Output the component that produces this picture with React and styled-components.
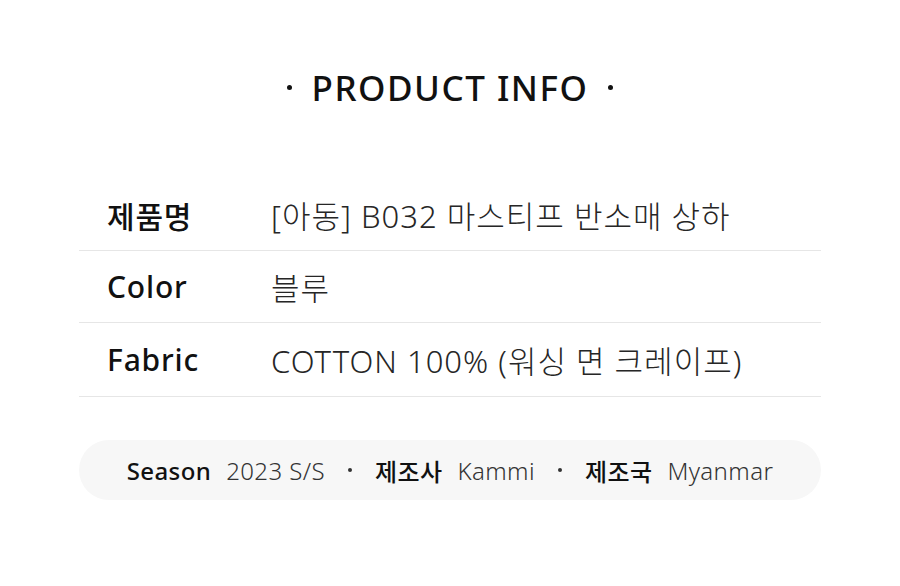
import React from "react";
import styled, { createGlobalStyle } from "styled-components";

const GlobalStyle = createGlobalStyle`
  html, body {
    margin: 0;
    padding: 0;
    background: #fff;
  }
  body {
    font-family: "Noto Sans", "Noto Sans CJK KR", sans-serif;
    color: #111;
  }
`;

const Page = styled.div`
  width: 900px;
  height: 586px;
  padding: 60px 79px 0;
  box-sizing: border-box;
  display: flex;
  flex-direction: column;
`;

const Heading = styled.h2`
  margin: 0;
  height: 54px;
  display: flex;
  align-items: center;
  justify-content: center;
  gap: 20px;
  font-size: 35px;
  font-weight: 500;
  letter-spacing: 1.5px;
  color: #111;
`;

const Dot = styled.span`
  width: 5px;
  height: 5px;
  border-radius: 50%;
  background: #111;
`;

const Table = styled.div`
  margin-top: 65px;
  display: flex;
  flex-direction: column;
`;

const Row = styled.div`
  display: flex;
  align-items: center;
  height: ${({ h }) => h || "72px"};
  border-bottom: 1px solid #e6e6e6;
  box-sizing: border-box;
`;

const Label = styled.div`
  width: 164px;
  padding-left: 28px;
  font-size: 30px;
  font-weight: 500;
  letter-spacing: 0.8px;
  color: #111;
`;

const Value = styled.div`
  font-size: 31px;
  font-weight: 300;
  letter-spacing: 1px;
  color: #262626;
`;

const Pill = styled.div`
  margin-top: 43px;
  height: 60px;
  border-radius: 30px;
  background: #f7f7f7;
  display: flex;
  align-items: center;
  justify-content: center;
  font-size: 24px;
  letter-spacing: 0.4px;
`;

const Key = styled.span`
  font-weight: 500;
  color: #111;
  margin-right: 15px;
`;

const Val = styled.span`
  font-weight: 300;
  color: #333;
`;

const Sep = styled.span`
  width: 4px;
  height: 4px;
  border-radius: 50%;
  background: #333;
  margin: 0 23px;
`;

const rows = [
  { label: "제품명", value: "[아동] B032 마스티프 반소매 상하", h: "72px" },
  { label: "Color", value: "블루", h: "72px" },
  { label: "Fabric", value: "COTTON 100% (워싱 면 크레이프)", h: "74px" },
];

export default function App() {
  return (
    <Page>
      <GlobalStyle />
      <Heading>
        <Dot />
        PRODUCT INFO
        <Dot />
      </Heading>
      <Table>
        {rows.map((r) => (
          <Row key={r.label} h={r.h}>
            <Label>{r.label}</Label>
            <Value>{r.value}</Value>
          </Row>
        ))}
      </Table>
      <Pill>
        <Key>Season</Key>
        <Val>2023 S/S</Val>
        <Sep />
        <Key>제조사</Key>
        <Val>Kammi</Val>
        <Sep />
        <Key>제조국</Key>
        <Val>Myanmar</Val>
      </Pill>
    </Page>
  );
}
